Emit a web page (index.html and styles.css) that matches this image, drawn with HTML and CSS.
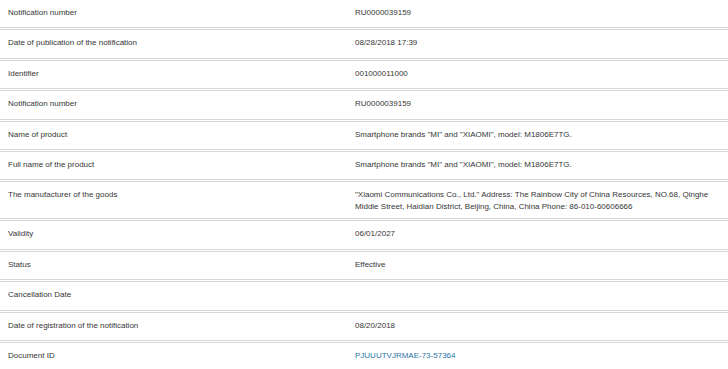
FILE: index.html
```html
<!DOCTYPE html>
<html lang="en">
<head>
<meta charset="utf-8">
<title>Notification</title>
<link rel="stylesheet" href="styles.css">
</head>
<body>
<div class="table">
  <div class="row"><div class="label">Notification number</div><div class="value">RU0000039159</div></div>
  <div class="row"><div class="label">Date of publication of the notification</div><div class="value">08/28/2018 17:39</div></div>
  <div class="row"><div class="label">Identifier</div><div class="value">001000011000</div></div>
  <div class="row"><div class="label">Notification number</div><div class="value">RU0000039159</div></div>
  <div class="row"><div class="label">Name of product</div><div class="value">Smartphone brands "MI" and "XIAOMI", model: M1806E7TG.</div></div>
  <div class="row"><div class="label">Full name of the product</div><div class="value">Smartphone brands "MI" and "XIAOMI", model: M1806E7TG.</div></div>
  <div class="row row-multi"><div class="label">The manufacturer of the goods</div><div class="value">"Xiaomi Communications Co., Ltd." Address: The Rainbow City of China Resources, NO.68, Qinghe Middle Street, Haidian District, Beijing, China, China Phone: 86-010-60606666</div></div>
  <div class="row"><div class="label">Validity</div><div class="value">06/01/2027</div></div>
  <div class="row"><div class="label">Status</div><div class="value">Effective</div></div>
  <div class="row"><div class="label">Cancellation Date</div><div class="value"></div></div>
  <div class="row"><div class="label">Date of registration of the notification</div><div class="value">08/20/2018</div></div>
  <div class="row"><div class="label">Document ID</div><div class="value"><a class="link" href="#">PJUUUTVJRMAE-73-57364</a></div></div>
</div>
</body>
</html>
```
FILE: styles.css
```css
html, body {
  margin: 0;
  padding: 0;
  background: #ffffff;
}
body {
  font-family: "Liberation Sans", Arial, sans-serif;
  font-size: 8px;
  color: #363636;
}
.table {
  display: flex;
  flex-direction: column;
}
.row {
  display: grid;
  grid-template-columns: 347px 1fr;
  padding: 7px 0 8.4px;
  border-bottom: 3px double #d8d8d8;
  line-height: 12px;
}
.row-multi {
  padding-bottom: 5px;
}
.row:last-child {
  border-bottom: none;
}
.label, .value {
  padding: 0 14px 0 8px;
}
.link {
  color: #2a74a8;
  text-decoration: none;
}
```
